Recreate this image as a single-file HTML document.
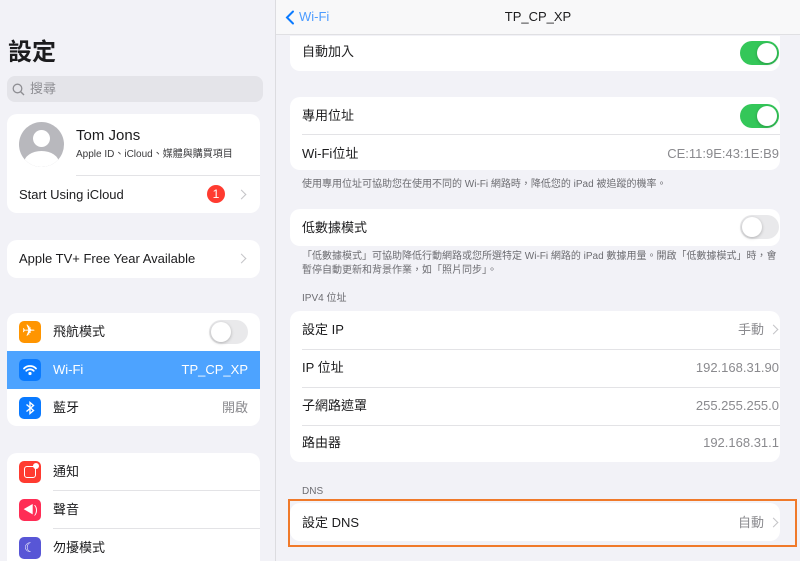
<!DOCTYPE html>
<html style="height:561px;overflow:hidden"><head><meta charset="utf-8"><style>
*{margin:0;padding:0;box-sizing:border-box}
body{width:800px;height:561px;overflow:hidden;background:#f2f2f7;font-family:"Liberation Sans","Noto Sans CJK TC",sans-serif;color:#1c1c1e;position:relative}
.a{position:absolute}
.card{position:absolute;background:#fff;border-radius:10px;overflow:hidden}
.t{position:absolute;font-size:13px;line-height:16px;white-space:nowrap}
.v{position:absolute;font-size:13px;line-height:16px;color:#8a8a8e;white-space:nowrap;text-align:right}
.sep{position:absolute;height:1px;background:#e3e3e6;right:0}
.note{position:absolute;font-size:10px;line-height:14px;color:#6d6d72;white-space:nowrap}
.tog{position:absolute;width:39px;height:24px;border-radius:12px}
.tog.on{background:#34c759}
.tog.off{background:#e9e9eb}
.tog i{position:absolute;top:2px;width:20px;height:20px;border-radius:50%;background:#fff;box-shadow:0 1px 3px rgba(0,0,0,.25)}
.on i{right:2px}.off i{left:2px}
.ch{position:absolute;width:7px;height:7px;border-right:1.5px solid #c4c4c7;border-top:1.5px solid #c4c4c7;transform:rotate(45deg)}
.ic{position:absolute;left:19px;width:22px;height:22px;border-radius:5px}
</style></head><body>
<!-- left -->
<div class="a" style="left:8px;top:38px;font-size:24px;font-weight:bold;line-height:30px">設定</div>
<div class="a" style="left:7px;top:76px;width:256px;height:26px;background:#e4e4e9;border-radius:8px"></div>
<svg class="a" style="left:12px;top:83px" width="13" height="13" viewBox="0 0 13 13"><circle cx="5.5" cy="5.5" r="4.3" fill="none" stroke="#8e8e93" stroke-width="1.3"/><path d="M8.7 8.7L12 12" stroke="#8e8e93" stroke-width="1.4"/></svg>
<div class="a" style="left:30px;top:81px;font-size:13px;line-height:16px;color:#8e8e93">搜尋</div>

<div class="card" style="left:7px;top:114px;width:253px;height:99px">
 <div class="a" style="left:12px;top:8px;width:45px;height:45px;border-radius:50%;background:#b8b8bd;overflow:hidden">
  <div class="a" style="left:14px;top:8px;width:17px;height:17px;border-radius:50%;background:#fff"></div>
  <div class="a" style="left:5px;top:29px;width:35px;height:24px;border-radius:50%;background:#fff"></div>
 </div>
 <div class="t" style="left:69px;top:13px;font-size:15px;line-height:18px">Tom Jons</div>
 <div class="t" style="left:69px;top:35px;font-size:10px;line-height:12px;color:#3a3a3c">Apple ID、iCloud、媒體與購買項目</div>
 <div class="sep" style="left:69px;top:61px;right:0"></div>
 <div class="t" style="left:12px;top:73px">Start Using iCloud</div>
 <div class="a" style="left:200px;top:71px;width:18px;height:18px;border-radius:50%;background:#ff3b30;color:#fff;font-size:12px;line-height:18px;text-align:center">1</div>
 <div class="ch" style="left:231px;top:77px"></div>
</div>

<div class="card" style="left:7px;top:240px;width:253px;height:38px">
 <div class="t" style="left:12px;top:11px">Apple TV+ Free Year Available</div>
 <div class="ch" style="left:231px;top:15px"></div>
</div>

<div class="card" style="left:7px;top:313px;width:253px;height:113px">
 <div class="a" style="left:0;top:38px;width:253px;height:38px;background:#4da3ff"></div>
 <div class="t" style="left:46px;top:11px">飛航模式</div>
 <div class="tog off" style="left:202px;top:7px"><i></i></div>
 <div class="t" style="left:46px;top:49px;color:#fff">Wi-Fi</div>
 <div class="t" style="right:12px;top:49px;color:#fff">TP_CP_XP</div>
 <div class="t" style="left:46px;top:87px">藍牙</div>
 <div class="v" style="right:12px;top:87px">開啟</div>
</div>
<div class="ic" style="top:321px;background:#ff9500"></div>
<div class="a" style="left:22px;top:322px;color:#fff;font-size:16px;line-height:20px">✈</div>
<div class="ic" style="top:359px;background:#0a7aff"></div>
<svg class="a" style="left:22px;top:363px" width="16" height="14" viewBox="0 0 16 14"><path d="M2 5.5a8.5 8.5 0 0 1 12 0M4.3 7.8a5.2 5.2 0 0 1 7.4 0" fill="none" stroke="#fff" stroke-width="1.8" stroke-linecap="round"/><circle cx="8" cy="10.5" r="1.6" fill="#fff"/></svg>
<div class="ic" style="top:397px;background:#0a7aff"></div>
<svg class="a" style="left:24px;top:400px" width="12" height="16" viewBox="0 0 12 16"><path d="M2.5 4.5l7 6-3.5 3V2.5l3.5 3-7 6" fill="none" stroke="#fff" stroke-width="1.4"/></svg>

<div class="card" style="left:7px;top:453px;width:253px;height:120px">
 <div class="t" style="left:46px;top:11px">通知</div>
 <div class="sep" style="left:46px;top:37px"></div>
 <div class="t" style="left:46px;top:49px">聲音</div>
 <div class="sep" style="left:46px;top:75px"></div>
 <div class="t" style="left:46px;top:87px">勿擾模式</div>
</div>
<div class="ic" style="top:461px;background:#ff3b30"></div>
<div class="a" style="left:24px;top:466px;width:12px;height:12px;border:1.5px solid #fff;border-radius:3px"></div>
<div class="a" style="left:33px;top:463px;width:6px;height:6px;border-radius:50%;background:#fff"></div>
<div class="ic" style="top:499px;background:#ff2d55"></div>
<div class="a" style="left:23px;top:503px;color:#fff;font-size:11px;line-height:14px">◀)</div>
<div class="ic" style="top:537px;background:#5856d6"></div>
<div class="a" style="left:24px;top:540px;color:#fff;font-size:13px;line-height:16px">☾</div>

<!-- right -->
<div class="a" style="left:275px;top:0;width:1px;height:561px;background:#dcdce0"></div>
<div class="a" style="left:276px;top:0;width:524px;height:35px;background:#f8f8f9;border-bottom:1px solid #e0e0e3"></div>
<svg class="a" style="left:285px;top:10px" width="10" height="15" viewBox="0 0 10 15"><path d="M8 1.5L2 7.5l6 6" fill="none" stroke="#0a7aff" stroke-width="2" stroke-linecap="round"/></svg>
<div class="a" style="left:299px;top:9px;font-size:13px;line-height:16px;color:#4d9cff">Wi-Fi</div>
<div class="a" style="left:276px;top:9px;width:524px;text-align:center;font-size:13px;line-height:16px">TP_CP_XP</div>

<div class="card" style="left:290px;top:36px;width:490px;height:35px;border-radius:0 0 10px 10px">
 <div class="t" style="left:12px;top:8px">自動加入</div>
 <div class="tog on" style="left:450px;top:5px"><i></i></div>
</div>

<div class="card" style="left:290px;top:97px;width:490px;height:73px">
 <div class="t" style="left:12px;top:11px">專用位址</div>
 <div class="tog on" style="left:450px;top:7px"><i></i></div>
 <div class="sep" style="left:12px;top:37px"></div>
 <div class="t" style="left:12px;top:49px">Wi-Fi位址</div>
 <div class="v" style="right:1px;top:49px">CE:11:9E:43:1E:B9</div>
</div>
<div class="note" style="left:302px;top:178px">使用專用位址可協助您在使用不同的 Wi-Fi 網路時，降低您的 iPad 被追蹤的機率。</div>

<div class="card" style="left:290px;top:209px;width:490px;height:37px">
 <div class="t" style="left:12px;top:11px">低數據模式</div>
 <div class="tog off" style="left:450px;top:6px"><i></i></div>
</div>
<div class="note" style="left:302px;top:250px">「低數據模式」可協助降低行動網路或您所選特定 Wi-Fi 網路的 iPad 數據用量。開啟「低數據模式」時，會</div>
<div class="note" style="left:302px;top:264px">暫停自動更新和背景作業，如「照片同步」。</div>
<div class="note" style="left:302px;top:292px">IPV4 位址</div>

<div class="card" style="left:290px;top:311px;width:490px;height:151px">
 <div class="t" style="left:12px;top:11px">設定 IP</div>
 <div class="v" style="right:16px;top:11px">手動</div>
 <div class="ch" style="left:480px;top:15px"></div>
 <div class="sep" style="left:12px;top:38px"></div>
 <div class="t" style="left:12px;top:49px">IP 位址</div>
 <div class="v" style="right:1px;top:49px">192.168.31.90</div>
 <div class="sep" style="left:12px;top:76px"></div>
 <div class="t" style="left:12px;top:87px">子網路遮罩</div>
 <div class="v" style="right:1px;top:87px">255.255.255.0</div>
 <div class="sep" style="left:12px;top:114px"></div>
 <div class="t" style="left:12px;top:124px">路由器</div>
 <div class="v" style="right:1px;top:124px">192.168.31.1</div>
</div>

<div class="note" style="left:302px;top:485px">DNS</div>
<div class="card" style="left:290px;top:503px;width:490px;height:38px">
 <div class="t" style="left:12px;top:12px">設定 DNS</div>
 <div class="v" style="right:16px;top:12px">自動</div>
 <div class="ch" style="left:480px;top:16px"></div>
</div>
<div class="a" style="left:288px;top:499px;width:509px;height:48px;border:2.5px solid #f07a2a"></div>
</body></html>
